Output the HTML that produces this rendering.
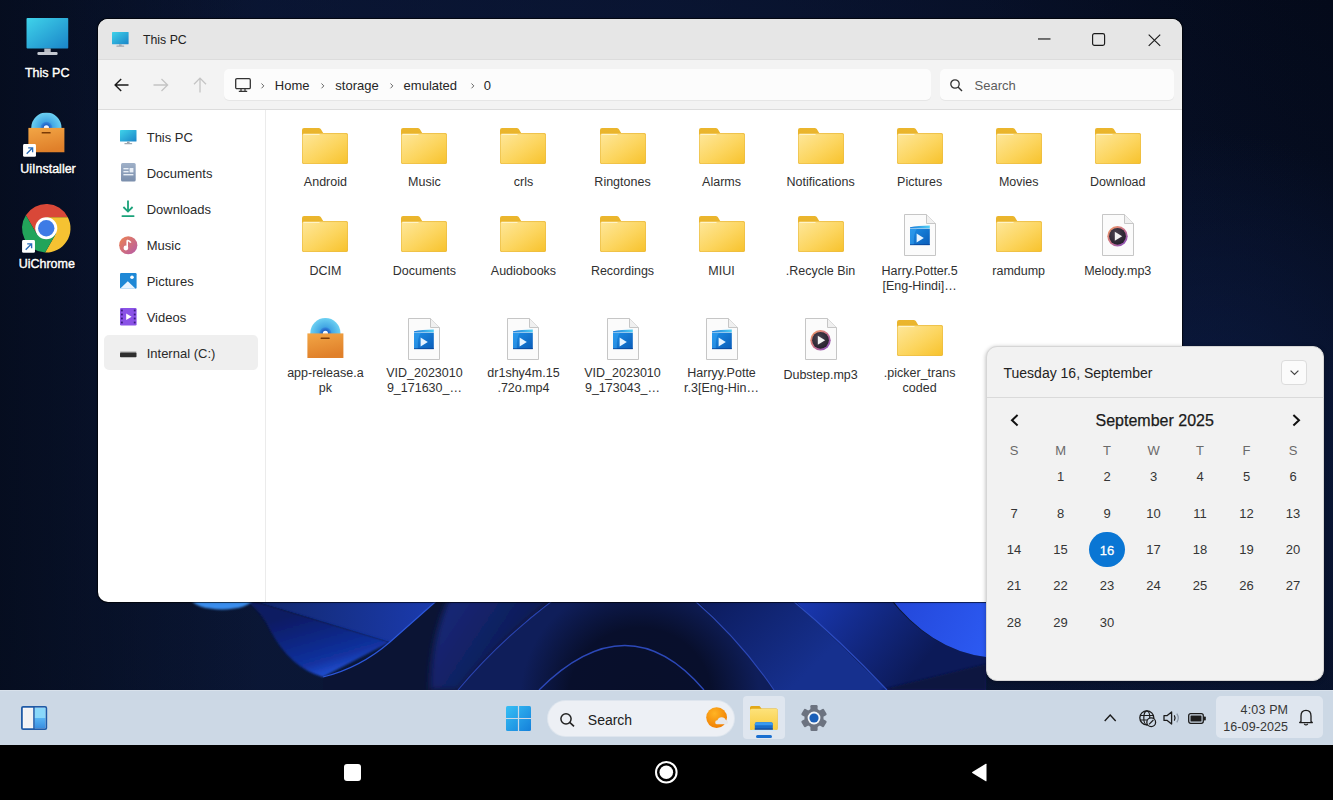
<!DOCTYPE html><html><head><meta charset="utf-8"><style>
*{box-sizing:border-box;margin:0;padding:0}
html,body{width:1333px;height:800px;overflow:hidden;background:#070f26;font-family:"Liberation Sans",sans-serif;position:relative}
.t{position:absolute;white-space:nowrap}
.i{position:absolute;overflow:visible}
.box{position:absolute}
</style></head><body>
<svg width="0" height="0" style="position:absolute"><defs>
<linearGradient id="gFolder" x1="0" y1="0" x2="1" y2="1"><stop offset="0" stop-color="#fee79a"/><stop offset="0.55" stop-color="#fcd55e"/><stop offset="1" stop-color="#f7c22c"/></linearGradient>
<linearGradient id="gFolderBack" x1="0" y1="0" x2="0" y2="1"><stop offset="0" stop-color="#ebb62e"/><stop offset="1" stop-color="#e2a818"/></linearGradient>
<linearGradient id="gScreen" x1="0" y1="0" x2="1" y2="1"><stop offset="0" stop-color="#3fd3ea"/><stop offset="1" stop-color="#1a84c8"/></linearGradient>
<linearGradient id="gStripe" x1="0" y1="0" x2="1" y2="0"><stop offset="0" stop-color="#1a7ad8"/><stop offset="1" stop-color="#52d0f6"/></linearGradient>
<linearGradient id="gVid" x1="0" y1="0" x2="1" y2="1"><stop offset="0" stop-color="#1c8ee6"/><stop offset="1" stop-color="#0a5cb8"/></linearGradient>
<filter id="fBlur" x="-20%" y="-20%" width="140%" height="140%"><feGaussianBlur stdDeviation="0.6"/></filter>
<radialGradient id="gDisk" cx="0.4" cy="0.35" r="0.7"><stop offset="0" stop-color="#4a4250"/><stop offset="1" stop-color="#231e2a"/></radialGradient>
<linearGradient id="gRing" x1="0" y1="0" x2="1" y2="1"><stop offset="0" stop-color="#f6a060"/><stop offset="0.5" stop-color="#c8708a"/><stop offset="1" stop-color="#7a48c8"/></linearGradient>
<linearGradient id="gBox" x1="0" y1="0" x2="0.3" y2="1"><stop offset="0" stop-color="#f2a646"/><stop offset="1" stop-color="#e0802a"/></linearGradient>
<radialGradient id="gDisc" cx="0.5" cy="0.5" r="0.5"><stop offset="0.3" stop-color="#3a9ee0"/><stop offset="1" stop-color="#6cd0f2"/></radialGradient>
<radialGradient id="gHole" cx="0.5" cy="0.5" r="0.5"><stop offset="0.4" stop-color="#1a5cc0"/><stop offset="1" stop-color="#3a8ee0"/></radialGradient>
<linearGradient id="gMusic" x1="0" y1="0" x2="1" y2="1"><stop offset="0" stop-color="#ee8450"/><stop offset="1" stop-color="#b45aa8"/></linearGradient>
<linearGradient id="gExp" x1="0" y1="0" x2="0" y2="1"><stop offset="0" stop-color="#fde27a"/><stop offset="1" stop-color="#f8cc40"/></linearGradient>
<linearGradient id="gWin" x1="0" y1="0" x2="1" y2="1"><stop offset="0" stop-color="#4cc4f4"/><stop offset="1" stop-color="#1a8ee0"/></linearGradient>
<symbol id="folder" viewBox="0 0 46 36">
<path d="M2 0H16.5Q17.9 0 18.8 0.9L21.2 5H44Q46 5 46 7V34Q46 36 44 36H2Q0 36 0 34V2Q0 0 2 0Z" fill="url(#gFolderBack)"/>
<path d="M0.3 7.6Q0.3 5.6 2.3 5.6H43.7Q45.7 5.6 45.7 7.6V33.7Q45.7 35.7 43.7 35.7H2.3Q0.3 35.7 0.3 33.7Z" fill="url(#gFolder)" stroke="#ecc04e" stroke-width="0.6"/>
<path d="M1.4 6.5H17.5" stroke="#fff4c8" stroke-width="1"/>
</symbol>
<symbol id="doc" viewBox="0 0 32 42">
<path d="M0.5 0.5H22.5L31.5 9.5V41.5H0.5Z" fill="#fbfbfb" stroke="#c6c6c6" stroke-width="1"/>
<path d="M22.5 0.5V9.5H31.5" fill="#f0f0f0" stroke="#c6c6c6" stroke-width="1"/>
</symbol>
<symbol id="video" viewBox="0 0 32 42">
<use href="#doc" width="32" height="42"/>
<path d="M6 14.2V13.2Q14 11.4 25.8 11.4V14.2Z" fill="url(#gStripe)"/>
<rect x="6" y="14.7" width="19.8" height="16.4" fill="url(#gVid)"/>
<path d="M6 14.7H13Q9.4 18.5 9.8 31.1H6Z" fill="#3aa6f4" opacity="0.5"/>
<rect x="6" y="30" width="19.8" height="1.1" fill="#083c90" opacity="0.6"/>
<path d="M12.6 19.4L19.8 24L12.6 28.6Z" fill="#e6f3ff"/>
</symbol>
<symbol id="mp3" viewBox="0 0 32 42">
<use href="#doc" width="32" height="42"/>
<circle cx="15.5" cy="22.3" r="10.2" fill="url(#gRing)" filter="url(#fBlur)"/>
<circle cx="15.5" cy="22.3" r="8.4" fill="url(#gDisk)"/>
<path d="M12.8 17.8L20.2 22.3L12.8 26.8Z" fill="#f2f2f2"/>
</symbol>
<symbol id="apk" viewBox="0 0 40 40">
<circle cx="18.4" cy="15.2" r="15.1" fill="url(#gDisc)"/>
<circle cx="18.4" cy="15.2" r="6" fill="url(#gHole)"/>
<circle cx="18.4" cy="15.4" r="2.6" fill="#f4f8ff"/>
<rect x="0.4" y="15.4" width="36" height="24.6" fill="url(#gBox)"/>
<rect x="13.6" y="19.4" width="9.1" height="1.6" rx="0.5" fill="#7a3a06"/>
</symbol>
<symbol id="monitor" viewBox="0 0 42 38">
<rect x="0" y="0" width="42.5" height="31" rx="1" fill="url(#gScreen)"/>
<rect x="18" y="31" width="6.5" height="4" fill="#b8bcc4"/>
<rect x="11" y="34.5" width="20.5" height="3" rx="1.2" fill="#c4c8d0"/>
</symbol>
<symbol id="badge" viewBox="0 0 14 14">
<rect x="0" y="0" width="13.5" height="13.4" rx="1.5" fill="#fff"/>
<path d="M3.8 10.2L10 4M5.4 4H10V8.6" stroke="#2a6cb8" stroke-width="1.4" fill="none"/>
</symbol>
</defs></svg>
<svg class="i" style="left:0;top:0" width="1333" height="690" viewBox="0 0 1333 690">
<defs>
<linearGradient id="wlin" x1="1333" y1="0" x2="700" y2="690" gradientUnits="userSpaceOnUse">
<stop offset="0" stop-color="#040a1a"/><stop offset="1" stop-color="#0b1838"/>
</linearGradient>
<linearGradient id="wleft" x1="0" y1="0" x2="260" y2="0" gradientUnits="userSpaceOnUse"><stop offset="0" stop-color="#040a18" stop-opacity="0.75"/><stop offset="1" stop-color="#040a18" stop-opacity="0"/></linearGradient>
<radialGradient id="wright" cx="1200" cy="430" r="300" gradientUnits="userSpaceOnUse"><stop offset="0" stop-color="#0d1d48" stop-opacity="0.75"/><stop offset="1" stop-color="#0d1d48" stop-opacity="0"/></radialGradient>
<radialGradient id="wbg" cx="620" cy="260" r="760" gradientUnits="userSpaceOnUse">
<stop offset="0" stop-color="#0c1a3e" stop-opacity="0.85"/><stop offset="0.6" stop-color="#0a1534" stop-opacity="0.35"/><stop offset="1" stop-color="#050b1c" stop-opacity="0"/>
</radialGradient>
<filter id="soft" x="-10%" y="-10%" width="120%" height="120%"><feGaussianBlur stdDeviation="3"/></filter>
<filter id="soft2" x="-10%" y="-10%" width="120%" height="120%"><feGaussianBlur stdDeviation="1.2"/></filter>
<linearGradient id="wL" x1="0" y1="0" x2="330" y2="0" gradientUnits="userSpaceOnUse"><stop offset="0" stop-color="#060d22" stop-opacity="0.6"/><stop offset="0.5" stop-color="#0a1636" stop-opacity="0.7"/><stop offset="1" stop-color="#0b1838" stop-opacity="0"/></linearGradient>
<linearGradient id="wA" x1="237" y1="600" x2="440" y2="620" gradientUnits="userSpaceOnUse"><stop offset="0" stop-color="#112665"/><stop offset="1" stop-color="#1b3bb0"/></linearGradient>
<linearGradient id="wB" x1="300" y1="612" x2="320" y2="680" gradientUnits="userSpaceOnUse"><stop offset="0" stop-color="#0a1a62"/><stop offset="0.75" stop-color="#1232a0"/><stop offset="1" stop-color="#2454d8"/></linearGradient>
<linearGradient id="wC" x1="440" y1="600" x2="560" y2="680" gradientUnits="userSpaceOnUse"><stop offset="0" stop-color="#15287a"/><stop offset="1" stop-color="#0b1540"/></linearGradient>
<radialGradient id="wD" cx="640" cy="700" r="120" gradientUnits="userSpaceOnUse"><stop offset="0" stop-color="#080f2a"/><stop offset="0.6" stop-color="#080f2c"/><stop offset="1" stop-color="#0f1e5a"/></radialGradient>
<linearGradient id="wE" x1="700" y1="600" x2="790" y2="690" gradientUnits="userSpaceOnUse"><stop offset="0" stop-color="#0c1b5c"/><stop offset="1" stop-color="#16308e"/></linearGradient>
<linearGradient id="wF" x1="790" y1="600" x2="900" y2="690" gradientUnits="userSpaceOnUse"><stop offset="0" stop-color="#1a3ab8"/><stop offset="1" stop-color="#0c1a58"/></linearGradient>
<linearGradient id="wG" x1="889" y1="600" x2="986" y2="650" gradientUnits="userSpaceOnUse"><stop offset="0" stop-color="#2346d8"/><stop offset="1" stop-color="#2c5af2"/></linearGradient>
</defs>
<rect width="1333" height="690" fill="url(#wlin)"/>
<rect width="1333" height="690" fill="url(#wbg)"/>
<rect width="260" height="690" fill="url(#wleft)"/>
<rect x="900" y="0" width="433" height="690" fill="url(#wright)"/>
<!-- dark left of ribbon -->

<!-- region A light band -->
<path d="M237 596 L442 596 L390 642 Z" fill="url(#wA)"/>
<!-- ribbon B -->
<path d="M237 596 L390 642 L323 677 Q290 668 270 630 Q258 605 237 596 Z" fill="url(#wB)" filter="url(#soft2)"/>
<path d="M323 677 Q360 668 390 642 L442 596 L560 596 L458 690 L323 690 Z" fill="#0b1434"/>
<!-- region C blue left of first line -->
<path d="M450 596 L556 596 Q500 640 458 690 L430 690 Q430 640 450 596Z" fill="url(#wC)" filter="url(#soft)"/>
<!-- dome -->
<path d="M552 600 Q620 596 694 600 Q740 640 774 690 L458 690 Q500 640 552 600 Z" fill="url(#wD)"/>
<!-- E between line1 and line2 -->
<path d="M694 598 L792 598 L887 690 L774 690 Q740 640 694 598 Z" fill="url(#wE)"/>
<!-- F between line2 and bright -->
<path d="M792 598 L889 598 Q930 650 986 657 L986 690 L887 690 Z" fill="url(#wF)"/>
<!-- bright -->
<path d="M889 596 Q930 650 986 657 L986 596 Z" fill="url(#wG)"/>
<path d="M880 690 L986 664 L986 690 Z" fill="#0a1440" filter="url(#soft2)"/>
<!-- lines -->
<path d="M442 596 Q420 640 390 642" fill="none" stroke="none"/>
<path d="M323 677 Q360 668 390 642 L442 596" fill="none" stroke="#2d58dc" stroke-width="1.2"/>
<path d="M458 690 Q500 640 556 598" fill="none" stroke="#2a44b0" stroke-width="1.1"/>
<path d="M539 690 Q628 601 704 690" fill="none" stroke="#2c48b8" stroke-width="1.3"/>
<path d="M694 600 Q740 640 774 690" fill="none" stroke="#2c48b8" stroke-width="1.1"/>
<path d="M792 600 Q840 640 887 690" fill="none" stroke="#2c4cc0" stroke-width="1.1"/>
<ellipse cx="222" cy="598" rx="31" ry="11.5" fill="#3a8eee" filter="url(#soft2)"/>
</svg>
<svg class="i" style="left:25.50px;top:17.50px;" width="42.5" height="37.5" viewBox="0 0 42.5 37.5"><use href="#monitor" width="42.5" height="37.5"/></svg>
<div class="t" style="left:2.20px;top:66px;width:90px;text-align:center;font-size:12.5px;line-height:14px;color:#fff;font-weight:normal;color:#fff;text-shadow:0 0 2px rgba(0,0,0,.9),0 1px 1px rgba(0,0,0,.7);-webkit-text-stroke:0.4px #fff;">This PC</div>
<svg class="i" style="left:28.00px;top:112.40px;" width="40" height="41" viewBox="0 0 40 40"><use href="#apk" width="40" height="40"/></svg>
<svg class="i" style="left:22.60px;top:143.60px;" width="13.5" height="13.4" viewBox="0 0 13.5 13.4"><use href="#badge" width="13.5" height="13.4"/></svg>
<div class="t" style="left:3.00px;top:162px;width:90px;text-align:center;font-size:12.5px;line-height:14px;color:#fff;font-weight:normal;color:#fff;text-shadow:0 0 2px rgba(0,0,0,.9),0 1px 1px rgba(0,0,0,.7);-webkit-text-stroke:0.4px #fff;">UiInstaller</div>
<svg class="i" style="left:22.40px;top:204.40px;" width="48.5" height="48.5" viewBox="0 0 48.5 48.5">
<g transform="scale(1.0104)">
<path d="M45.33 13 L24 13 L14.47 29.5 L3.8 11.03 A24 24 0 0 1 45.33 13Z" fill="#d94838"/>
<path d="M22.87 47.97 L33.53 29.5 L24 13 L45.33 13 A24 24 0 0 1 22.87 47.97Z" fill="#f5c232"/>
<path d="M3.8 11.03 L14.47 29.5 L33.53 29.5 L22.87 47.97 A24 24 0 0 1 3.8 11.03Z" fill="#22a45a"/>
<circle cx="24" cy="24" r="10.9" fill="#fff"/>
<circle cx="24" cy="24" r="8.1" fill="#3d7be6"/>
</g>
</svg>
<svg class="i" style="left:22.20px;top:240.40px;" width="13.5" height="13.4" viewBox="0 0 13.5 13.4"><use href="#badge" width="13.5" height="13.4"/></svg>
<div class="t" style="left:1.80px;top:257px;width:90px;text-align:center;font-size:12.5px;line-height:14px;color:#fff;font-weight:normal;color:#fff;text-shadow:0 0 2px rgba(0,0,0,.9),0 1px 1px rgba(0,0,0,.7);-webkit-text-stroke:0.4px #fff;">UiChrome</div>
<div class="box" style="left:98px;top:19px;width:1084px;height:583px;background:#fff;border-radius:10px;overflow:hidden;box-shadow:0 0 0 1px rgba(0,0,0,.55),0 0 3px rgba(0,0,0,.4)"><div class="box" style="left:0;top:0;width:1084px;height:41px;background:#e6e6e6"></div><div class="box" style="left:0;top:40px;width:1084px;height:1px;background:#dcdcdc"></div><div class="box" style="left:0;top:41px;width:1084px;height:49px;background:#f3f3f3"></div><div class="box" style="left:0;top:90px;width:1084px;height:1px;background:#dcdcdc"></div><div class="box" style="left:167px;top:91px;width:1px;height:492px;background:#ebebeb"></div></div>
<svg class="i" style="left:112.00px;top:32.00px;" width="17" height="15" viewBox="0 0 17 15"><rect x="0" y="0" width="16.6" height="12.3" rx="0.6" fill="url(#gScreen)"/><rect x="7" y="12.3" width="2.6" height="1.5" fill="#9aa2ac"/><rect x="4.4" y="13.6" width="7.8" height="1.2" rx="0.5" fill="#a0a8b0"/></svg>
<div class="t" style="left:143.00px;top:33px;font-size:12.3px;line-height:14px;color:#222;">This PC</div>
<svg class="i" style="left:1038.00px;top:38.00px;" width="13" height="2" viewBox="0 0 13 2"><rect x="0" y="0.4" width="12.5" height="1.15" fill="#1a1a1a"/></svg>
<svg class="i" style="left:1092.00px;top:33.00px;" width="14" height="13" viewBox="0 0 14 13"><rect x="0.6" y="0.6" width="12" height="11.7" rx="1.8" fill="none" stroke="#1a1a1a" stroke-width="1.15"/></svg>
<svg class="i" style="left:1147.50px;top:33.50px;" width="13" height="12.5" viewBox="0 0 13 12.5"><path d="M0.7 0.7L12.2 11.8M12.2 0.7L0.7 11.8" stroke="#1a1a1a" stroke-width="1.15"/></svg>
<svg class="i" style="left:113.50px;top:77.50px;" width="15" height="14" viewBox="0 0 15 14"><path d="M14.5 7H1.2M7.2 1L1.1 7L7.2 13" fill="none" stroke="#1a1a1a" stroke-width="1.4"/></svg>
<svg class="i" style="left:152.50px;top:77.50px;" width="16" height="14" viewBox="0 0 16 14"><path d="M0.5 7H14.5M8.5 1L14.6 7L8.5 13" fill="none" stroke="#c4c4c4" stroke-width="1.3"/></svg>
<svg class="i" style="left:192.50px;top:77.00px;" width="14" height="16" viewBox="0 0 14 16"><path d="M7 15.5V1.2M1 7.2L7 1.1L13 7.2" fill="none" stroke="#c4c4c4" stroke-width="1.3"/></svg>
<div class="box" style="left:224px;top:69px;width:707px;height:31px;background:#fcfcfc;border-radius:5px;box-shadow:0 1px 0 #e6e6e6"></div>
<div class="box" style="left:939.5px;top:69px;width:234px;height:31px;background:#fcfcfc;border-radius:5px;box-shadow:0 1px 0 #e6e6e6"></div>
<svg class="i" style="left:234.50px;top:78.00px;" width="16" height="14" viewBox="0 0 16 14"><rect x="0.7" y="0.7" width="14.6" height="10" rx="1.2" fill="none" stroke="#333" stroke-width="1.3"/><path d="M6 11V13.3M10 11V13.3M3.8 13.3H12.2" stroke="#333" stroke-width="1.2"/></svg>
<svg class="i" style="left:261.10px;top:83.20px;" width="3.5" height="6" viewBox="0 0 3.5 6"><path d="M0.5 0.5L2.8 2.9L0.5 5.3" fill="none" stroke="#555" stroke-width="0.9"/></svg>
<svg class="i" style="left:321.20px;top:83.20px;" width="3.5" height="6" viewBox="0 0 3.5 6"><path d="M0.5 0.5L2.8 2.9L0.5 5.3" fill="none" stroke="#555" stroke-width="0.9"/></svg>
<svg class="i" style="left:390.00px;top:83.20px;" width="3.5" height="6" viewBox="0 0 3.5 6"><path d="M0.5 0.5L2.8 2.9L0.5 5.3" fill="none" stroke="#555" stroke-width="0.9"/></svg>
<svg class="i" style="left:470.80px;top:83.20px;" width="3.5" height="6" viewBox="0 0 3.5 6"><path d="M0.5 0.5L2.8 2.9L0.5 5.3" fill="none" stroke="#555" stroke-width="0.9"/></svg>
<div class="t" style="left:274.80px;top:78px;font-size:13px;line-height:15px;color:#262626;">Home</div>
<div class="t" style="left:335.30px;top:78px;font-size:13px;line-height:15px;color:#262626;">storage</div>
<div class="t" style="left:403.60px;top:78px;font-size:13px;line-height:15px;color:#262626;">emulated</div>
<div class="t" style="left:483.80px;top:78px;font-size:13px;line-height:15px;color:#262626;">0</div>
<svg class="i" style="left:950.00px;top:79.00px;" width="13" height="13" viewBox="0 0 13 13"><circle cx="5" cy="5" r="4.2" fill="none" stroke="#333" stroke-width="1.3"/><path d="M8 8L12 12" stroke="#333" stroke-width="1.4"/></svg>
<div class="t" style="left:974.60px;top:78px;font-size:13px;line-height:15px;color:#5c5c5c;">Search</div>
<div class="box" style="left:104px;top:335px;width:154px;height:35px;background:#efefef;border-radius:5px"></div>
<div class="t" style="left:146.70px;top:130px;font-size:13px;line-height:15px;color:#2a2a2a;">This PC</div>
<div class="t" style="left:146.70px;top:166px;font-size:13px;line-height:15px;color:#2a2a2a;">Documents</div>
<div class="t" style="left:146.70px;top:202px;font-size:13px;line-height:15px;color:#2a2a2a;">Downloads</div>
<div class="t" style="left:146.70px;top:238px;font-size:13px;line-height:15px;color:#2a2a2a;">Music</div>
<div class="t" style="left:146.70px;top:274px;font-size:13px;line-height:15px;color:#2a2a2a;">Pictures</div>
<div class="t" style="left:146.70px;top:310px;font-size:13px;line-height:15px;color:#2a2a2a;">Videos</div>
<div class="t" style="left:146.70px;top:346px;font-size:13px;line-height:15px;color:#2a2a2a;">Internal (C:)</div>
<svg class="i" style="left:119.70px;top:129.50px;" width="17" height="15" viewBox="0 0 17 15"><rect x="0" y="0" width="16.5" height="11.6" rx="0.6" fill="url(#gScreen)"/><rect x="7" y="11.6" width="2.6" height="1.6" fill="#9aa2ac"/><rect x="4.4" y="12.9" width="7.8" height="1.3" rx="0.5" fill="#a0a8b0"/></svg>
<svg class="i" style="left:120.50px;top:163.20px;" width="15" height="19" viewBox="0 0 15 19"><defs><linearGradient id="gDoc" x1="0" y1="0" x2="0" y2="1"><stop offset="0" stop-color="#9fb0c8"/><stop offset="1" stop-color="#7a8eac"/></linearGradient></defs><rect x="0" y="0" width="14.7" height="18.5" rx="1.5" fill="url(#gDoc)"/><rect x="2.4" y="5" width="5.2" height="1.4" fill="#e8eef6"/><rect x="2.4" y="8" width="5.2" height="1.4" fill="#e8eef6"/><rect x="8.6" y="5" width="3.8" height="4.4" fill="#e8eef6"/><rect x="2.4" y="11" width="10" height="1.4" fill="#e8eef6"/></svg>
<svg class="i" style="left:121.00px;top:200.00px;" width="14" height="17.5" viewBox="0 0 14 17.5"><path d="M7 0.5V11.5M2.4 7L7 11.6L11.6 7" fill="none" stroke="#1aa27a" stroke-width="1.8"/><rect x="0.5" y="15.2" width="13" height="1.9" rx="0.8" fill="#1aa27a"/></svg>
<svg class="i" style="left:119.00px;top:236.00px;" width="18.5" height="18.5" viewBox="0 0 18.5 18.5"><circle cx="9.25" cy="9.25" r="9.1" fill="url(#gMusic)"/><path d="M8.2 4.2V11.6" stroke="#fff" stroke-width="1.6"/><circle cx="6.9" cy="12" r="2.4" fill="#fff"/><path d="M8.2 4.2Q10.6 4.6 11.8 6.6" fill="none" stroke="#fff" stroke-width="1.6"/></svg>
<svg class="i" style="left:119.60px;top:272.90px;" width="17" height="16" viewBox="0 0 17 16"><rect x="0" y="0" width="16.6" height="15.7" rx="1.2" fill="#1e88d6"/><circle cx="12" cy="4.3" r="1.8" fill="#fff"/><path d="M0 15.7L7.8 8.2L15.6 15.7Z" fill="#e8f4ff"/></svg>
<svg class="i" style="left:119.60px;top:307.90px;" width="17" height="18" viewBox="0 0 17 18"><rect x="0" y="0" width="16.6" height="17.5" rx="1.2" fill="#8a52e6"/><g fill="#3a1a80"><rect x="1" y="1.6" width="1.8" height="1.8"/><rect x="1" y="5.6" width="1.8" height="1.8"/><rect x="1" y="9.6" width="1.8" height="1.8"/><rect x="1" y="13.6" width="1.8" height="1.8"/><rect x="13.8" y="1.6" width="1.8" height="1.8"/><rect x="13.8" y="5.6" width="1.8" height="1.8"/><rect x="13.8" y="9.6" width="1.8" height="1.8"/><rect x="13.8" y="13.6" width="1.8" height="1.8"/></g><path d="M6.2 5.4L11.6 8.75L6.2 12.1Z" fill="#fff"/></svg>
<svg class="i" style="left:119.60px;top:350.80px;" width="17" height="7" viewBox="0 0 17 7"><rect x="0" y="0" width="16.5" height="2" rx="0.8" fill="#c8c8c8"/><rect x="0" y="1.6" width="16.5" height="4.6" rx="0.8" fill="#2e2e2e"/></svg>
<svg class="i" style="left:302.40px;top:127.50px;" width="46" height="36" viewBox="0 0 46 36"><use href="#folder" width="46" height="36"/></svg>
<div class="t" style="left:276.40px;top:175px;width:98px;text-align:center;font-size:12.5px;line-height:14px;color:#303030;">Android</div>
<svg class="i" style="left:401.44px;top:127.50px;" width="46" height="36" viewBox="0 0 46 36"><use href="#folder" width="46" height="36"/></svg>
<div class="t" style="left:375.44px;top:175px;width:98px;text-align:center;font-size:12.5px;line-height:14px;color:#303030;">Music</div>
<svg class="i" style="left:500.48px;top:127.50px;" width="46" height="36" viewBox="0 0 46 36"><use href="#folder" width="46" height="36"/></svg>
<div class="t" style="left:474.48px;top:175px;width:98px;text-align:center;font-size:12.5px;line-height:14px;color:#303030;">crls</div>
<svg class="i" style="left:599.52px;top:127.50px;" width="46" height="36" viewBox="0 0 46 36"><use href="#folder" width="46" height="36"/></svg>
<div class="t" style="left:573.52px;top:175px;width:98px;text-align:center;font-size:12.5px;line-height:14px;color:#303030;">Ringtones</div>
<svg class="i" style="left:698.56px;top:127.50px;" width="46" height="36" viewBox="0 0 46 36"><use href="#folder" width="46" height="36"/></svg>
<div class="t" style="left:672.56px;top:175px;width:98px;text-align:center;font-size:12.5px;line-height:14px;color:#303030;">Alarms</div>
<svg class="i" style="left:797.60px;top:127.50px;" width="46" height="36" viewBox="0 0 46 36"><use href="#folder" width="46" height="36"/></svg>
<div class="t" style="left:771.60px;top:175px;width:98px;text-align:center;font-size:12.5px;line-height:14px;color:#303030;">Notifications</div>
<svg class="i" style="left:896.64px;top:127.50px;" width="46" height="36" viewBox="0 0 46 36"><use href="#folder" width="46" height="36"/></svg>
<div class="t" style="left:870.64px;top:175px;width:98px;text-align:center;font-size:12.5px;line-height:14px;color:#303030;">Pictures</div>
<svg class="i" style="left:995.68px;top:127.50px;" width="46" height="36" viewBox="0 0 46 36"><use href="#folder" width="46" height="36"/></svg>
<div class="t" style="left:969.68px;top:175px;width:98px;text-align:center;font-size:12.5px;line-height:14px;color:#303030;">Movies</div>
<svg class="i" style="left:1094.72px;top:127.50px;" width="46" height="36" viewBox="0 0 46 36"><use href="#folder" width="46" height="36"/></svg>
<div class="t" style="left:1068.72px;top:175px;width:98px;text-align:center;font-size:12.5px;line-height:14px;color:#303030;">Download</div>
<svg class="i" style="left:302.40px;top:215.90px;" width="46" height="36" viewBox="0 0 46 36"><use href="#folder" width="46" height="36"/></svg>
<div class="t" style="left:276.40px;top:264px;width:98px;text-align:center;font-size:12.5px;line-height:14px;color:#303030;">DCIM</div>
<svg class="i" style="left:401.44px;top:215.90px;" width="46" height="36" viewBox="0 0 46 36"><use href="#folder" width="46" height="36"/></svg>
<div class="t" style="left:375.44px;top:264px;width:98px;text-align:center;font-size:12.5px;line-height:14px;color:#303030;">Documents</div>
<svg class="i" style="left:500.48px;top:215.90px;" width="46" height="36" viewBox="0 0 46 36"><use href="#folder" width="46" height="36"/></svg>
<div class="t" style="left:474.48px;top:264px;width:98px;text-align:center;font-size:12.5px;line-height:14px;color:#303030;">Audiobooks</div>
<svg class="i" style="left:599.52px;top:215.90px;" width="46" height="36" viewBox="0 0 46 36"><use href="#folder" width="46" height="36"/></svg>
<div class="t" style="left:573.52px;top:264px;width:98px;text-align:center;font-size:12.5px;line-height:14px;color:#303030;">Recordings</div>
<svg class="i" style="left:698.56px;top:215.90px;" width="46" height="36" viewBox="0 0 46 36"><use href="#folder" width="46" height="36"/></svg>
<div class="t" style="left:672.56px;top:264px;width:98px;text-align:center;font-size:12.5px;line-height:14px;color:#303030;">MIUI</div>
<svg class="i" style="left:797.60px;top:215.90px;" width="46" height="36" viewBox="0 0 46 36"><use href="#folder" width="46" height="36"/></svg>
<div class="t" style="left:771.60px;top:264px;width:98px;text-align:center;font-size:12.5px;line-height:14px;color:#303030;">.Recycle Bin</div>
<svg class="i" style="left:903.64px;top:213.90px;" width="32" height="42" viewBox="0 0 32 42"><use href="#video" width="32" height="42"/></svg>
<div class="t" style="left:870.64px;top:264px;width:98px;text-align:center;font-size:12.5px;line-height:14px;color:#303030;">Harry.Potter.5</div>
<div class="t" style="left:870.64px;top:279px;width:98px;text-align:center;font-size:12.5px;line-height:14px;color:#303030;">[Eng-Hindi]…</div>
<svg class="i" style="left:995.68px;top:215.90px;" width="46" height="36" viewBox="0 0 46 36"><use href="#folder" width="46" height="36"/></svg>
<div class="t" style="left:969.68px;top:264px;width:98px;text-align:center;font-size:12.5px;line-height:14px;color:#303030;">ramdump</div>
<svg class="i" style="left:1101.72px;top:213.90px;" width="32" height="42" viewBox="0 0 32 42"><use href="#mp3" width="32" height="42"/></svg>
<div class="t" style="left:1068.72px;top:264px;width:98px;text-align:center;font-size:12.5px;line-height:14px;color:#303030;">Melody.mp3</div>
<svg class="i" style="left:307.40px;top:318.10px;" width="40" height="40" viewBox="0 0 40 40"><use href="#apk" width="40" height="40"/></svg>
<div class="t" style="left:276.40px;top:366px;width:98px;text-align:center;font-size:12.5px;line-height:14px;color:#303030;">app-release.a</div>
<div class="t" style="left:276.40px;top:381px;width:98px;text-align:center;font-size:12.5px;line-height:14px;color:#303030;">pk</div>
<svg class="i" style="left:408.44px;top:317.70px;" width="32" height="42" viewBox="0 0 32 42"><use href="#video" width="32" height="42"/></svg>
<div class="t" style="left:375.44px;top:366px;width:98px;text-align:center;font-size:12.5px;line-height:14px;color:#303030;">VID_2023010</div>
<div class="t" style="left:375.44px;top:381px;width:98px;text-align:center;font-size:12.5px;line-height:14px;color:#303030;">9_171630_…</div>
<svg class="i" style="left:507.48px;top:317.70px;" width="32" height="42" viewBox="0 0 32 42"><use href="#video" width="32" height="42"/></svg>
<div class="t" style="left:474.48px;top:366px;width:98px;text-align:center;font-size:12.5px;line-height:14px;color:#303030;">dr1shy4m.15</div>
<div class="t" style="left:474.48px;top:381px;width:98px;text-align:center;font-size:12.5px;line-height:14px;color:#303030;">.72o.mp4</div>
<svg class="i" style="left:606.52px;top:317.70px;" width="32" height="42" viewBox="0 0 32 42"><use href="#video" width="32" height="42"/></svg>
<div class="t" style="left:573.52px;top:366px;width:98px;text-align:center;font-size:12.5px;line-height:14px;color:#303030;">VID_2023010</div>
<div class="t" style="left:573.52px;top:381px;width:98px;text-align:center;font-size:12.5px;line-height:14px;color:#303030;">9_173043_…</div>
<svg class="i" style="left:705.56px;top:317.70px;" width="32" height="42" viewBox="0 0 32 42"><use href="#video" width="32" height="42"/></svg>
<div class="t" style="left:672.56px;top:366px;width:98px;text-align:center;font-size:12.5px;line-height:14px;color:#303030;">Harryy.Potte</div>
<div class="t" style="left:672.56px;top:381px;width:98px;text-align:center;font-size:12.5px;line-height:14px;color:#303030;">r.3[Eng-Hin…</div>
<svg class="i" style="left:804.60px;top:317.70px;" width="32" height="42" viewBox="0 0 32 42"><use href="#mp3" width="32" height="42"/></svg>
<div class="t" style="left:771.60px;top:368px;width:98px;text-align:center;font-size:12.5px;line-height:14px;color:#303030;">Dubstep.mp3</div>
<svg class="i" style="left:896.64px;top:319.70px;" width="46" height="36" viewBox="0 0 46 36"><use href="#folder" width="46" height="36"/></svg>
<div class="t" style="left:870.64px;top:366px;width:98px;text-align:center;font-size:12.5px;line-height:14px;color:#303030;">.picker_trans</div>
<div class="t" style="left:870.64px;top:381px;width:98px;text-align:center;font-size:12.5px;line-height:14px;color:#303030;">coded</div>
<div class="box" style="left:986px;top:346px;width:338px;height:335px;background:#f2f2f2;border:1px solid #d6d6d6;border-radius:11px;box-shadow:0 1px 4px rgba(0,0,0,.3)"></div>
<div class="box" style="left:987px;top:397px;width:336px;height:1px;background:#dadada"></div>
<div class="t" style="left:1003.50px;top:365px;font-size:14px;line-height:16px;color:#222;">Tuesday 16, September</div>
<div class="box" style="left:1281px;top:359.5px;width:26px;height:25.5px;background:#fbfbfb;border:1px solid #dcdcdc;border-radius:4px"></div>
<svg class="i" style="left:1289.50px;top:369.50px;" width="9" height="6" viewBox="0 0 9 6"><path d="M0.6 0.6L4.5 4.5L8.4 0.6" fill="none" stroke="#444" stroke-width="1.2"/></svg>
<svg class="i" style="left:1010.00px;top:414.00px;" width="9" height="12.5" viewBox="0 0 9 12.5"><path d="M7.6 1L2 6.25L7.6 11.5" fill="none" stroke="#111" stroke-width="2"/></svg>
<svg class="i" style="left:1292.00px;top:414.00px;" width="9" height="12.5" viewBox="0 0 9 12.5"><path d="M1.4 1L7 6.25L1.4 11.5" fill="none" stroke="#111" stroke-width="2"/></svg>
<div class="t" style="left:1074.70px;top:412px;width:160px;text-align:center;font-size:16px;line-height:17px;color:#1a1a1a;-webkit-text-stroke:0.25px #1a1a1a;">September 2025</div>
<div class="t" style="left:999.10px;top:443px;width:30px;text-align:center;font-size:13px;line-height:15px;color:#6a6a6a;">S</div>
<div class="t" style="left:1045.60px;top:443px;width:30px;text-align:center;font-size:13px;line-height:15px;color:#6a6a6a;">M</div>
<div class="t" style="left:1092.10px;top:443px;width:30px;text-align:center;font-size:13px;line-height:15px;color:#6a6a6a;">T</div>
<div class="t" style="left:1138.60px;top:443px;width:30px;text-align:center;font-size:13px;line-height:15px;color:#6a6a6a;">W</div>
<div class="t" style="left:1185.10px;top:443px;width:30px;text-align:center;font-size:13px;line-height:15px;color:#6a6a6a;">T</div>
<div class="t" style="left:1231.60px;top:443px;width:30px;text-align:center;font-size:13px;line-height:15px;color:#6a6a6a;">F</div>
<div class="t" style="left:1278.10px;top:443px;width:30px;text-align:center;font-size:13px;line-height:15px;color:#6a6a6a;">S</div>
<div class="box" style="left:1089.2px;top:531.8px;width:35.6px;height:35.6px;border-radius:50%;background:#0a76d4"></div>
<div class="t" style="left:1045.60px;top:469px;width:30px;text-align:center;font-size:13px;line-height:15px;color:#353535;">1</div>
<div class="t" style="left:1092.10px;top:469px;width:30px;text-align:center;font-size:13px;line-height:15px;color:#353535;">2</div>
<div class="t" style="left:1138.60px;top:469px;width:30px;text-align:center;font-size:13px;line-height:15px;color:#353535;">3</div>
<div class="t" style="left:1185.10px;top:469px;width:30px;text-align:center;font-size:13px;line-height:15px;color:#353535;">4</div>
<div class="t" style="left:1231.60px;top:469px;width:30px;text-align:center;font-size:13px;line-height:15px;color:#353535;">5</div>
<div class="t" style="left:1278.10px;top:469px;width:30px;text-align:center;font-size:13px;line-height:15px;color:#353535;">6</div>
<div class="t" style="left:999.10px;top:506px;width:30px;text-align:center;font-size:13px;line-height:15px;color:#353535;">7</div>
<div class="t" style="left:1045.60px;top:506px;width:30px;text-align:center;font-size:13px;line-height:15px;color:#353535;">8</div>
<div class="t" style="left:1092.10px;top:506px;width:30px;text-align:center;font-size:13px;line-height:15px;color:#353535;">9</div>
<div class="t" style="left:1138.60px;top:506px;width:30px;text-align:center;font-size:13px;line-height:15px;color:#353535;">10</div>
<div class="t" style="left:1185.10px;top:506px;width:30px;text-align:center;font-size:13px;line-height:15px;color:#353535;">11</div>
<div class="t" style="left:1231.60px;top:506px;width:30px;text-align:center;font-size:13px;line-height:15px;color:#353535;">12</div>
<div class="t" style="left:1278.10px;top:506px;width:30px;text-align:center;font-size:13px;line-height:15px;color:#353535;">13</div>
<div class="t" style="left:999.10px;top:542px;width:30px;text-align:center;font-size:13px;line-height:15px;color:#353535;">14</div>
<div class="t" style="left:1045.60px;top:542px;width:30px;text-align:center;font-size:13px;line-height:15px;color:#353535;">15</div>
<div class="t" style="left:1092.10px;top:543px;width:30px;text-align:center;font-size:13px;line-height:15px;color:#fff;-webkit-text-stroke:0.3px #fff;">16</div>
<div class="t" style="left:1138.60px;top:542px;width:30px;text-align:center;font-size:13px;line-height:15px;color:#353535;">17</div>
<div class="t" style="left:1185.10px;top:542px;width:30px;text-align:center;font-size:13px;line-height:15px;color:#353535;">18</div>
<div class="t" style="left:1231.60px;top:542px;width:30px;text-align:center;font-size:13px;line-height:15px;color:#353535;">19</div>
<div class="t" style="left:1278.10px;top:542px;width:30px;text-align:center;font-size:13px;line-height:15px;color:#353535;">20</div>
<div class="t" style="left:999.10px;top:578px;width:30px;text-align:center;font-size:13px;line-height:15px;color:#353535;">21</div>
<div class="t" style="left:1045.60px;top:578px;width:30px;text-align:center;font-size:13px;line-height:15px;color:#353535;">22</div>
<div class="t" style="left:1092.10px;top:578px;width:30px;text-align:center;font-size:13px;line-height:15px;color:#353535;">23</div>
<div class="t" style="left:1138.60px;top:578px;width:30px;text-align:center;font-size:13px;line-height:15px;color:#353535;">24</div>
<div class="t" style="left:1185.10px;top:578px;width:30px;text-align:center;font-size:13px;line-height:15px;color:#353535;">25</div>
<div class="t" style="left:1231.60px;top:578px;width:30px;text-align:center;font-size:13px;line-height:15px;color:#353535;">26</div>
<div class="t" style="left:1278.10px;top:578px;width:30px;text-align:center;font-size:13px;line-height:15px;color:#353535;">27</div>
<div class="t" style="left:999.10px;top:615px;width:30px;text-align:center;font-size:13px;line-height:15px;color:#353535;">28</div>
<div class="t" style="left:1045.60px;top:615px;width:30px;text-align:center;font-size:13px;line-height:15px;color:#353535;">29</div>
<div class="t" style="left:1092.10px;top:615px;width:30px;text-align:center;font-size:13px;line-height:15px;color:#353535;">30</div>
<div class="box" style="left:0;top:690px;width:1333px;height:55px;background:#ccd8e5;border-top:1px solid #d8e1eb"></div>
<svg class="i" style="left:20.70px;top:705.70px;" width="26.2" height="24" viewBox="0 0 26.2 24"><defs><linearGradient id="gSnapB" x1="0" y1="0" x2="0" y2="1"><stop offset="0" stop-color="#8ad8fa"/><stop offset="0.5" stop-color="#8ad8fa"/><stop offset="0.5" stop-color="#58b4f4"/><stop offset="1" stop-color="#3a8ee0"/></linearGradient></defs><rect x="0.9" y="0.9" width="24.4" height="22.2" rx="1.2" fill="#fff" stroke="#1f5aa6" stroke-width="1.8"/><rect x="13.3" y="1.8" width="11.1" height="20.4" fill="url(#gSnapB)"/><rect x="12.2" y="1" width="1.5" height="22" fill="#1f5aa6"/><rect x="2.3" y="2.3" width="9.6" height="19.4" fill="#f2f2f4"/></svg>
<svg class="i" style="left:505.70px;top:705.80px;" width="25" height="25" viewBox="0 0 25 25"><defs><linearGradient id="gWinU" x1="0" y1="0" x2="25" y2="25" gradientUnits="userSpaceOnUse"><stop offset="0" stop-color="#36bff5"/><stop offset="1" stop-color="#1580da"/></linearGradient></defs><path d="M1.5 0H11.9V11.9H0V1.5Q0 0 1.5 0Z" fill="url(#gWinU)"/><path d="M13.1 0H23.5Q25 0 25 1.5V11.9H13.1Z" fill="url(#gWinU)"/><path d="M0 13.1H11.9V25H1.5Q0 25 0 23.5Z" fill="url(#gWinU)"/><path d="M13.1 13.1H25V23.5Q25 25 23.5 25H13.1Z" fill="url(#gWinU)"/></svg>
<div class="box" style="left:548px;top:700.7px;width:186.4px;height:35.6px;background:#edf0f5;border-radius:18px;box-shadow:0 0 0 1px rgba(255,255,255,.35)"></div>
<svg class="i" style="left:559.70px;top:712.60px;" width="15" height="14" viewBox="0 0 15 14"><circle cx="6" cy="5.8" r="5.1" fill="none" stroke="#222" stroke-width="1.5"/><path d="M9.7 9.4L14 13.4" stroke="#222" stroke-width="1.6"/></svg>
<div class="t" style="left:587.80px;top:712px;font-size:14px;line-height:16px;color:#202020;">Search</div>
<svg class="i" style="left:705.60px;top:707.20px;" width="24" height="22" viewBox="0 0 24 22"><defs><radialGradient id="gSun" cx="0.4" cy="0.3" r="0.75"><stop offset="0" stop-color="#ffb424"/><stop offset="1" stop-color="#f07c00"/></radialGradient></defs><circle cx="10.6" cy="10.6" r="10.4" fill="url(#gSun)"/><path d="M10.6 17.2Q9.2 17.2 9.2 15.2Q9.2 13.2 11.4 13.2Q12.4 10.2 15.6 10.2Q18.8 10.2 19.8 13Q22.2 13.2 22.2 15.2Q22.2 17.2 20 17.2Z" fill="#e6e8ec"/></svg>
<div class="box" style="left:742.5px;top:696.3px;width:42.5px;height:42.7px;background:#dfe6ef;border-radius:4px"></div>
<svg class="i" style="left:750.20px;top:706.20px;" width="27.6" height="25" viewBox="0 0 27.6 25"><path d="M0 1.5Q0 0 1.5 0H9.5L11.5 2.6H26.1Q27.6 2.6 27.6 4.1V22Q27.6 23.8 26.1 23.8H1.5Q0 23.8 0 22.3Z" fill="#e2a818"/><path d="M0 4.4Q0 2.8 1.6 2.8H26Q27.6 2.8 27.6 4.4V23.8H0Z" fill="url(#gExp)"/><path d="M4.8 23.8V18Q4.8 16.2 6.6 16.2H21Q22.8 16.2 22.8 18V23.8Z" fill="#1a6cc8"/><path d="M4.8 18Q4.8 16.2 6.6 16.2H21Q22.8 16.2 22.8 18V19.2H4.8Z" fill="#3a9af0"/><rect x="4.8" y="22.6" width="18" height="1.2" fill="#0a3a8a"/><rect x="2" y="23.8" width="23.6" height="1.2" fill="#cfe8fa"/></svg>
<div class="box" style="left:756px;top:735px;width:16px;height:2.6px;background:#1a6fd0;border-radius:2px"></div>
<svg class="i" style="left:801.30px;top:705.00px;" width="26" height="26" viewBox="0 0 26 26"><g transform="translate(13 13)"><g fill="#6c7380"><rect x="-3.6" y="-13" width="7.2" height="6" rx="1.2" transform="rotate(0)"/><rect x="-3.6" y="-13" width="7.2" height="6" rx="1.2" transform="rotate(60)"/><rect x="-3.6" y="-13" width="7.2" height="6" rx="1.2" transform="rotate(120)"/><rect x="-3.6" y="-13" width="7.2" height="6" rx="1.2" transform="rotate(180)"/><rect x="-3.6" y="-13" width="7.2" height="6" rx="1.2" transform="rotate(240)"/><rect x="-3.6" y="-13" width="7.2" height="6" rx="1.2" transform="rotate(300)"/></g><circle r="9.6" fill="#6c7380"/><circle r="6.4" fill="#f2f5f8"/><circle r="4.6" fill="#1a5fb8"/></g></svg>
<svg class="i" style="left:1104.20px;top:714.00px;" width="12.4" height="7.6" viewBox="0 0 12.4 7.6"><path d="M0.7 6.9L6.2 1.1L11.7 6.9" fill="none" stroke="#1a1a1a" stroke-width="1.4"/></svg>
<svg class="i" style="left:1139.00px;top:709.80px;" width="17" height="16.5" viewBox="0 0 17 16.5"><circle cx="7.8" cy="7.8" r="7" fill="none" stroke="#1c1c1c" stroke-width="1.3"/><ellipse cx="7.8" cy="7.8" rx="3" ry="7" fill="none" stroke="#1c1c1c" stroke-width="1.2"/><path d="M1 5.5H14.6M1 10H14.6" stroke="#1c1c1c" stroke-width="1.1"/><circle cx="12.2" cy="12.2" r="4.4" fill="#ccd8e5" stroke="#1c1c1c" stroke-width="1.3"/><path d="M10 14.4L14.4 10" stroke="#1c1c1c" stroke-width="1.2"/></svg>
<svg class="i" style="left:1162.60px;top:711.00px;" width="18" height="14" viewBox="0 0 18 14"><path d="M1 4.6H4.2L8.6 1V13L4.2 9.4H1Z" fill="none" stroke="#1c1c1c" stroke-width="1.3" stroke-linejoin="round"/><path d="M11.3 4.4Q12.8 7 11.3 9.6" fill="none" stroke="#1c1c1c" stroke-width="1.2"/><path d="M13.8 2.6Q16.8 7 13.8 11.4" fill="none" stroke="#8a96a6" stroke-width="1.2"/></svg>
<svg class="i" style="left:1188.00px;top:712.80px;" width="18" height="11" viewBox="0 0 18 11"><rect x="0.7" y="0.7" width="14.6" height="9.6" rx="2" fill="none" stroke="#1c1c1c" stroke-width="1.3"/><rect x="2.5" y="2.5" width="11" height="6" rx="0.6" fill="#1c1c1c"/><rect x="15.8" y="3.5" width="2" height="4" rx="0.8" fill="#1c1c1c"/></svg>
<div class="box" style="left:1215.8px;top:695.8px;width:107.6px;height:42px;background:#dfe6ef;border-radius:5px"></div>
<div class="t" style="left:1208.20px;top:703px;width:80px;text-align:right;font-size:12.5px;line-height:14px;color:#363636;letter-spacing:0.15px;">4:03 PM</div>
<div class="t" style="left:1208.20px;top:720px;width:80px;text-align:right;font-size:12.5px;line-height:14px;color:#363636;letter-spacing:0.1px;">16-09-2025</div>
<svg class="i" style="left:1299.00px;top:709.00px;" width="14" height="17" viewBox="0 0 14 17"><path d="M2 12.4V7Q2 1.3 7 1.3Q12 1.3 12 7V12.4L13.3 13.6H0.7Z" fill="none" stroke="#1c1c1c" stroke-width="1.3" stroke-linejoin="round"/><path d="M5.2 14.8Q7 17 8.8 14.8" fill="none" stroke="#1c1c1c" stroke-width="1.2"/></svg>
<div class="box" style="left:0;top:745px;width:1333px;height:55px;background:#000"></div>
<div class="box" style="left:344px;top:764px;width:17px;height:16.5px;background:#fff;border-radius:3px"></div>
<svg class="i" style="left:654.90px;top:761.10px;" width="22.6" height="22.6" viewBox="0 0 22.6 22.6"><circle cx="11.3" cy="11.3" r="10.3" fill="none" stroke="#fff" stroke-width="2"/><circle cx="11.3" cy="11.3" r="6.8" fill="#fff"/></svg>
<svg class="i" style="left:970.50px;top:762.90px;" width="16.5" height="19" viewBox="0 0 16.5 19"><path d="M15.5 1.2V17.8Q15.5 18.6 14.8 18.2L1.3 10Q0.6 9.5 1.3 9L14.8 0.8Q15.5 0.4 15.5 1.2Z" fill="#fff"/></svg>
</body></html>
